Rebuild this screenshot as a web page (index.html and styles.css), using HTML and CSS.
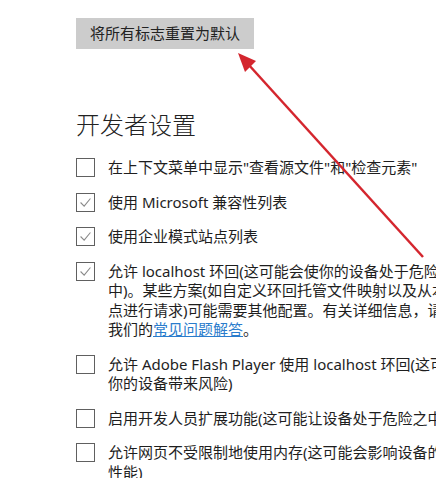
FILE: index.html
```html
<!DOCTYPE html>
<html lang="zh-CN">
<head>
<meta charset="utf-8">
<link rel="stylesheet" href="styles.css">
</head>
<body>
<div class="page">
  <button class="reset">将所有标志重置为默认</button>
  <h2 class="title">开发者设置</h2>
  <ul class="opts">
    <li class="opt"><span class="box"></span><span class="label">在上下文菜单中显示"查看源文件"和"检查元素"</span></li>
    <li class="opt"><span class="box checked"><svg viewBox="0 0 19 19"><polyline points="4,9.5 8,13.5 15,5"/></svg></span><span class="label">使用 Microsoft 兼容性列表</span></li>
    <li class="opt"><span class="box checked"><svg viewBox="0 0 19 19"><polyline points="4,9.5 8,13.5 15,5"/></svg></span><span class="label">使用企业模式站点列表</span></li>
    <li class="opt"><span class="box checked"><svg viewBox="0 0 19 19"><polyline points="4,9.5 8,13.5 15,5"/></svg></span><span class="label">允许 localhost 环回(这可能会使你的设备处于危险之<br>中)。某些方案(如自定义环回托管文件映射以及从本地站<br>点进行请求)可能需要其他配置。有关详细信息，请参阅<br>我们的<a class="link" href="#">常见问题解答</a>。</span></li>
    <li class="opt"><span class="box"></span><span class="label">允许 Adobe Flash Player 使用 localhost 环回(这可能会给<br>你的设备带来风险)</span></li>
    <li class="opt"><span class="box"></span><span class="label">启用开发人员扩展功能(这可能让设备处于危险之中)</span></li>
    <li class="opt"><span class="box"></span><span class="label">允许网页不受限制地使用内存(这可能会影响设备的<br>性能)</span></li>
  </ul>
</div>
<svg class="arrow" viewBox="0 0 436 478" width="436" height="478">
  <line x1="423" y1="257" x2="248" y2="64"/>
  <polygon points="238,53 256,61 245,72"/>
</svg>
</body>
</html>
```
FILE: styles.css
```css
html, body {
  margin: 0;
  padding: 0;
  background: #ffffff;
  overflow: hidden;
  width: 436px;
  height: 478px;
}
body {
  position: relative;
  font-family: "Noto Sans", "Noto Sans CJK SC", sans-serif;
  color: #1e1e1e;
}
.page {
  padding: 18px 0 0 76px;
}
.reset {
  display: block;
  width: 178px;
  height: 31px;
  margin: 0;
  padding: 0;
  border: none;
  background: #cccccc;
  color: #222;
  font-family: "Noto Sans", "Noto Sans CJK SC", sans-serif;
  font-size: 15px;
  line-height: 31px;
}
.title {
  margin: 60px 0 17px 0;
  font-size: 24px;
  line-height: 32px;
  font-weight: 300;
  color: #222;
}
.opts {
  list-style: none;
  margin: 0;
  padding: 0;
  display: flex;
  flex-direction: column;
  gap: 15px;
}
.opt {
  display: flex;
  align-items: flex-start;
  gap: 13px;
}
.box {
  flex: none;
  width: 17px;
  height: 17px;
  border: 1px solid #606060;
  margin-top: 0;
  display: flex;
}
.box svg {
  width: 17px;
  height: 17px;
}
.box polyline {
  fill: none;
  stroke: #8a8a8a;
  stroke-width: 1.2;
}
.label {
  font-size: 15px;
  line-height: 19.5px;
  white-space: nowrap;
}
.link {
  color: #2a7ccc;
  text-decoration: underline;
}
.arrow {
  position: absolute;
  left: 0;
  top: 0;
  pointer-events: none;
}
.arrow line {
  stroke: #d4262e;
  stroke-width: 2.5;
}
.arrow polygon {
  fill: #d4262e;
}
```
